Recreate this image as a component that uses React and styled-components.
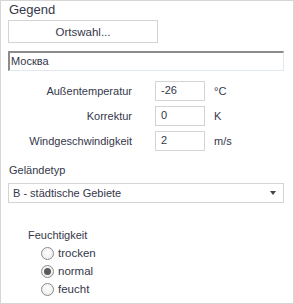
import React, {useState} from 'react';
import styled, {createGlobalStyle} from 'styled-components';

const GlobalStyle = createGlobalStyle`
  html, body { margin: 0; padding: 0; background: #fff; }
  body { font-family: "Liberation Sans", Arial, sans-serif; }
`

const Panel = styled.div`
  box-sizing: border-box;
  width: 294px;
  height: 304px;
  border: 1px solid #d6d6d6;
  padding: 0 9px 0 7px;
  display: flex;
  flex-direction: column;
  color: #34374a;
  font-family: "Liberation Sans", Arial, sans-serif;
  font-size: 11px;
`

const Title = styled.div`
  font-size: 13px;
  height: 18px;
  line-height: 18px;
  padding-left: 1px;
`

const Button = styled.button`
  box-sizing: border-box;
  width: 150px;
  height: 23px;
  margin-top: 1px;
  background: #fff;
  border: 1px solid #d4d4d4;
  color: #34374a;
  font-family: "Liberation Sans", Arial, sans-serif;
  font-size: 11.5px;
  padding: 0;
`

const TextBox = styled.div`
  box-sizing: border-box;
  height: 20px;
  margin-top: 8px;
  border-top: 2px solid #8c8c8c;
  border-left: 2px solid #8c8c8c;
  border-right: 1px solid #e2e8ef;
  border-bottom: 1px solid #e2e8ef;
  padding-left: 1px;
  line-height: 16px;
`

const FieldGrid = styled.div`
  display: grid;
  grid-template-columns: 147px 50px auto;
  grid-auto-rows: 20px;
  row-gap: 5px;
  margin-top: 10px;
  align-items: center;
`

const Label = styled.div`
  text-align: right;
  padding-right: 23px;
  white-space: nowrap;
`

const NumberBox = styled.div`
  box-sizing: border-box;
  height: 20px;
  border: 1px solid #d4d4d4;
  padding-left: 5px;
  line-height: 17px;
`

const Unit = styled.div`
  padding-left: 9px;
`

const SectionLabel = styled.div`
  height: 16px;
  line-height: 16px;
  margin-top: ${p => p.$top}px;
  padding-left: ${p => p.$indent || 1}px;
`

const Select = styled.div`
  box-sizing: border-box;
  height: 20px;
  margin-top: 5px;
  border: 1px solid #d4d4d4;
  display: flex;
  align-items: center;
  justify-content: space-between;
  padding: 0 7px 0 4px;
`

const Arrow = styled.span`
  width: 0;
  height: 0;
  border-left: 3.5px solid transparent;
  border-right: 3.5px solid transparent;
  border-top: 4px solid #444;
`

const RadioList = styled.div`
  display: flex;
  flex-direction: column;
  margin-top: 1px;
  padding-left: 33px;
`

const RadioRow = styled.label`
  display: flex;
  align-items: center;
  height: 18px;
  gap: 4px;
  font-size: 11.5px;
  cursor: default;
`

const Circle = styled.span`
  box-sizing: border-box;
  width: 13px;
  height: 13px;
  border-radius: 50%;
  border: 1px solid #8a8a8a;
  background: radial-gradient(circle at 50% 40%, #ffffff, #e8e8e8);
  display: flex;
  align-items: center;
  justify-content: center;
  &::after {
    content: '';
    width: 7px;
    height: 7px;
    border-radius: 50%;
    background: ${p => p.$checked ? '#5a5a5a' : 'transparent'};
  }
`

const fields = [
  {label: 'Außentemperatur', value: '-26', unit: '°C'},
  {label: 'Korrektur', value: '0', unit: 'K'},
  {label: 'Windgeschwindigkeit', value: '2', unit: 'm/s'},
]

const App = () => {
  const [humidity, setHumidity] = useState('normal')

  return (
    <>
      <GlobalStyle/>
      <Panel>
        <Title>Gegend</Title>
        <Button>Ortswahl...</Button>
        <TextBox>Москва</TextBox>

        <FieldGrid>
          {fields.map(f => (
            <React.Fragment key={f.label}>
              <Label>{f.label}</Label>
              <NumberBox>{f.value}</NumberBox>
              <Unit>{f.unit}</Unit>
            </React.Fragment>
          ))}
        </FieldGrid>

        <SectionLabel $top={11}>Geländetyp</SectionLabel>
        <Select>
          <span>B - städtische Gebiete</span>
          <Arrow/>
        </Select>

        <SectionLabel $top={24} $indent={20}>Feuchtigkeit</SectionLabel>
        <RadioList>
          {['trocken', 'normal', 'feucht'].map(h => (
            <RadioRow key={h} onClick={() => setHumidity(h)}>
              <Circle $checked={humidity === h}/>
              {h}
            </RadioRow>
          ))}
        </RadioList>
      </Panel>
    </>
  )
}

export default App;
